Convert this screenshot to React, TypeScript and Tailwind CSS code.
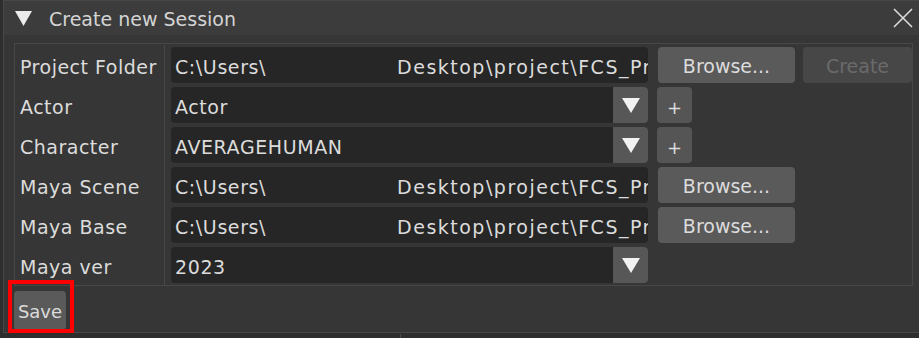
import React from 'react';

const PathInput: React.FC = () => (
  <div className="w-[477px] h-[36px] bg-[#262626] rounded-[4px] pl-[4px] pt-[4px] flex items-center overflow-hidden whitespace-nowrap tracking-[0.6px]">
    <span>C:\Users\</span>
    <span className="ml-[131px] flex-1 min-w-0 overflow-hidden tracking-[1.5px]">Desktop\project\FCS_Pro</span>
  </div>
);

const Combo: React.FC<{ value: string }> = ({ value }) => (
  <div className="w-[477px] h-[36px] bg-[#262626] rounded-[4px] flex items-center">
    <span className="flex-1 pl-[4px] pt-[4px] tracking-[0.6px]">{value}</span>
    <div className="w-[35px] h-full bg-[#575757] rounded-r-[4px] flex items-center justify-center">
      <svg width="18" height="16" viewBox="0 0 18 16">
        <polygon points="0,1 18,1 9,16" fill="#f2f2f2" />
      </svg>
    </div>
  </div>
);

const Btn: React.FC<{ children: React.ReactNode; w: string; dim?: boolean }> = ({ children, w, dim }) => (
  <div
    className={
      dim
        ? `${w} h-[36px] rounded-[4px] bg-[#474747] text-[#6a6a6a] pt-[3px] flex items-center justify-center`
        : `${w} h-[36px] rounded-[4px] bg-[#5a5a5a] pt-[3px] flex items-center justify-center`
    }
  >
    {children}
  </div>
);

const Plus: React.FC = () => (
  <div className="ml-[9px] w-[35px] h-[36px] rounded-[4px] bg-[#555555] flex items-center justify-center text-[18px] pt-[5px]">
    +
  </div>
);

const rows: { label: string; cell: React.ReactNode }[] = [
  {
    label: 'Project Folder',
    cell: (
      <>
        <PathInput />
        <div className="ml-[10px]">
          <Btn w="w-[137px]">Browse...</Btn>
        </div>
        <div className="ml-[8px]">
          <Btn w="w-[109px]" dim>
            Create
          </Btn>
        </div>
      </>
    ),
  },
  { label: 'Actor', cell: (<><Combo value="Actor" /><Plus /></>) },
  { label: 'Character', cell: (<><Combo value="AVERAGEHUMAN" /><Plus /></>) },
  {
    label: 'Maya Scene',
    cell: (
      <>
        <PathInput />
        <div className="ml-[10px]">
          <Btn w="w-[137px]">Browse...</Btn>
        </div>
      </>
    ),
  },
  {
    label: 'Maya Base',
    cell: (
      <>
        <PathInput />
        <div className="ml-[10px]">
          <Btn w="w-[137px]">Browse...</Btn>
        </div>
      </>
    ),
  },
  { label: 'Maya ver', cell: <Combo value="2023" /> },
];

const App: React.FC = () => {
  return (
    <div className="w-[919px] h-[338px] bg-[#2e2e2e] overflow-hidden font-['DejaVu_Sans',sans-serif] text-[19px] text-[#dcdcdc] relative">
      <div className="h-[333px] bg-[#363636] border-t border-b border-l border-[#474747] ml-[3px] flex flex-col">
        {/* title bar */}
        <div className="h-[34px] bg-[#3c3c3c] flex items-center pl-[11px] pr-[6px]">
          <svg width="17" height="15" viewBox="0 0 17 15">
            <polygon points="0,0 17,0 8.5,15" fill="#ececec" />
          </svg>
          <span className="ml-[17px] pt-[3px] text-[#d4d4d4]">Create new Session</span>
          <svg className="ml-auto" width="20" height="20" viewBox="0 0 20 20">
            <path d="M1 1 L19 19 M19 1 L1 19" stroke="#dcdcdc" strokeWidth="1.6" />
          </svg>
        </div>

        {/* table */}
        <div className="mt-[8px] ml-[10px] w-[899px] border border-[#474747] pt-[1px]">
          {rows.map((r) => (
            <div key={r.label} className="flex h-[40px]">
              <div className="w-[150px] border-r border-[#474747] pl-[5px] pt-[4px] flex items-center tracking-[0.5px]">
                {r.label}
              </div>
              <div className="flex-1 pl-[6px] flex items-center">{r.cell}</div>
            </div>
          ))}
        </div>

        {/* footer */}
        <div className="pl-[10px] pt-[5px]">
          <div className="w-[52px] h-[39px] rounded-[4px] bg-[#5a5a5a] text-[18px] pt-[2px] flex items-center justify-center">
            Save
          </div>
        </div>
      </div>

      {/* annotation */}
      <div className="absolute left-[8px] top-[280px] w-[66px] h-[53px] border-[4px] border-[#ff0000]" />

      {/* neighbouring panel edge */}
      <div className="absolute left-[400px] top-[334px] w-px h-[4px] bg-[#4a4a4a]" />
    </div>
  );
};

export default App;
